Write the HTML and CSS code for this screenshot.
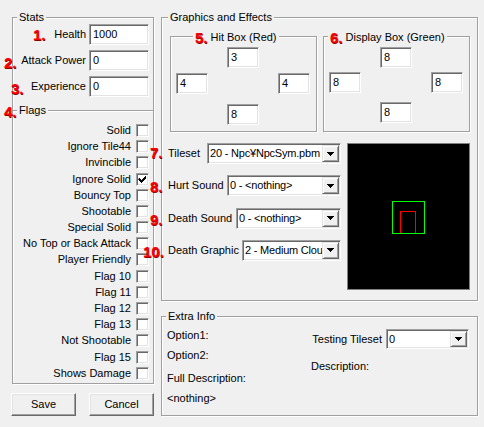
FILE: index.html
```html
<!DOCTYPE html>
<html>
<head>
<meta charset="utf-8">
<title>NPC Editor</title>
<link rel="stylesheet" href="styles.css">
</head>
<body>
<div class="dialog">
  <div class="left">
    <div class="group stats">
      <span class="legend">Stats</span>
      <div class="stat-grid">
        <span class="lbl">Health</span><span class="tb wide">1000</span>
        <span class="lbl">Attack Power</span><span class="tb wide">0</span>
        <span class="lbl">Experience</span><span class="tb wide">0</span>
      </div>
    </div>
    <div class="group flags">
      <span class="legend">Flags</span>
      <div class="flag"><span>Solid</span><span class="cb"></span></div>
      <div class="flag"><span>Ignore Tile44</span><span class="cb"></span></div>
      <div class="flag"><span>Invincible</span><span class="cb"></span></div>
      <div class="flag"><span>Ignore Solid</span><span class="cb"><svg width="9" height="9" viewBox="0 0 9 9"><path d="M1 3h1v1h1v1h1v-1h1v-1h1v-1h1v-1h1v3h-1v1h-1v1h-1v1h-1v1h-1v-1h-1v-1h-1v-1h-1z" fill="#000"/></svg></span></div>
      <div class="flag"><span>Bouncy Top</span><span class="cb"></span></div>
      <div class="flag"><span>Shootable</span><span class="cb"></span></div>
      <div class="flag"><span>Special Solid</span><span class="cb"></span></div>
      <div class="flag"><span>No Top or Back Attack</span><span class="cb"></span></div>
      <div class="flag"><span>Player Friendly</span><span class="cb"></span></div>
      <div class="flag"><span>Flag 10</span><span class="cb"></span></div>
      <div class="flag"><span>Flag 11</span><span class="cb"></span></div>
      <div class="flag"><span>Flag 12</span><span class="cb"></span></div>
      <div class="flag"><span>Flag 13</span><span class="cb"></span></div>
      <div class="flag"><span>Not Shootable</span><span class="cb"></span></div>
      <div class="flag"><span>Flag 15</span><span class="cb"></span></div>
      <div class="flag"><span>Shows Damage</span><span class="cb"></span></div>
    </div>
    <div class="buttons">
      <button class="btn">Save</button>
      <button class="btn">Cancel</button>
    </div>
  </div>

  <div class="right">
    <div class="group gfx">
      <span class="legend gfx-legend">Graphics and Effects</span>
      <div class="boxes">
        <div class="group box">
          <span class="legend hit-legend"><b class="num inl">5.</b>Hit Box (Red)</span>
          <div class="diamond hit">
            <span class="tb sm top">3</span>
            <span class="tb sm lft">4</span>
            <span class="tb sm rgt">4</span>
            <span class="tb sm bot">8</span>
          </div>
        </div>
        <div class="group box">
          <span class="legend"><b class="num inl">6.</b>Display Box (Green)</span>
          <div class="diamond disp">
            <span class="tb sm top">8</span>
            <span class="tb sm lft">8</span>
            <span class="tb sm rgt">8</span>
            <span class="tb sm bot">8</span>
          </div>
        </div>
      </div>
      <div class="lower">
        <div class="combos">
          <div class="crow"><span>Tileset</span><span class="combo w-tileset"><span class="ctext">20 - Npc¥NpcSym.pbm</span><span class="drop"><svg width="7" height="4" viewBox="0 0 7 4"><path d="M0 0h7v1h-1v1h-1v1h-1v1h-1v-1h-1v-1h-1v-1h-1z" fill="#000"/></svg></span></span></div>
          <div class="crow"><span>Hurt Sound</span><span class="combo w-hurt"><span class="ctext">0 - &lt;nothing&gt;</span><span class="drop"><svg width="7" height="4" viewBox="0 0 7 4"><path d="M0 0h7v1h-1v1h-1v1h-1v1h-1v-1h-1v-1h-1v-1h-1z" fill="#000"/></svg></span></span></div>
          <div class="crow"><span>Death Sound</span><span class="combo w-death"><span class="ctext">0 - &lt;nothing&gt;</span><span class="drop"><svg width="7" height="4" viewBox="0 0 7 4"><path d="M0 0h7v1h-1v1h-1v1h-1v1h-1v-1h-1v-1h-1v-1h-1z" fill="#000"/></svg></span></span></div>
          <div class="crow"><span>Death Graphic</span><span class="combo w-graphic"><span class="ctext">2 - Medium Clou</span><span class="drop"><svg width="7" height="4" viewBox="0 0 7 4"><path d="M0 0h7v1h-1v1h-1v1h-1v1h-1v-1h-1v-1h-1v-1h-1z" fill="#000"/></svg></span></span></div>
        </div>
        <div class="preview">
          <svg width="121" height="145" viewBox="0 0 121 145">
            <rect x="52.5" y="67.5" width="15" height="22" fill="none" stroke="#ff0000" stroke-width="1"/>
            <rect x="44.5" y="57.5" width="32" height="32" fill="none" stroke="#00ff00" stroke-width="1"/>
          </svg>
        </div>
      </div>
    </div>

    <div class="group extra">
      <span class="legend">Extra Info</span>
      <div class="ecol">
        <div class="line">Option1:</div>
        <div class="line l2">Option2:</div>
        <div class="line l3">Full Description:</div>
        <div class="line l4">&lt;nothing&gt;</div>
      </div>
      <div class="ecol rcol">
        <div class="trow"><span>Testing Tileset</span><span class="combo w-test"><span class="ctext">0</span><span class="drop"><svg width="7" height="4" viewBox="0 0 7 4"><path d="M0 0h7v1h-1v1h-1v1h-1v1h-1v-1h-1v-1h-1v-1h-1z" fill="#000"/></svg></span></span></div>
        <div class="line desc">Description:</div>
      </div>
    </div>
  </div>

  <b class="num n1">1.</b>
  <b class="num n2">2.</b>
  <b class="num n3">3.</b>
  <b class="num n4">4.</b>
  <b class="num n7">7.</b>
  <b class="num n8">8.</b>
  <b class="num n9">9.</b>
  <b class="num n10">10.</b>
</div>
</body>
</html>
```

FILE: styles.css
```css
* { box-sizing: border-box; }
html, body { margin: 0; padding: 0; background: #f0f0f0; }
body {
  font-family: "Liberation Sans", Arial, sans-serif;
  font-size: 11px;
  line-height: 13px;
  color: #000;
  width: 484px;
  height: 427px;
  overflow: hidden;
}
.dialog {
  position: relative;
  display: flex;
  align-items: flex-start;
  gap: 7px;
  padding: 17px 0 0 12px;
  height: 427px;
}
.left { width: 142px; display: flex; flex-direction: column; }
.right { width: 317px; display: flex; flex-direction: column; gap: 15px; }

/* group boxes */
.group {
  position: relative;
  border: 1px solid #a0a0a0;
  box-shadow: inset 1px 1px #fff, 1px 1px #fff;
}
.legend {
  position: absolute;
  top: -7px;
  left: 4px;
  padding: 0 2px;
  background: #f0f0f0;
  white-space: nowrap;
}
.gfx-legend { left: 6px; }
.hit-legend { left: 22px; }

/* text boxes */
.tb {
  display: block;
  height: 21px;
  background: #fff;
  border: 1px solid;
  border-color: #a0a0a0 #fff #fff #a0a0a0;
  box-shadow: inset 1px 1px #696969, inset -1px -1px #e3e3e3;
  padding: 0 3px;
  line-height: 19px;
  white-space: nowrap;
}
.tb.wide { width: 60px; }
.tb.sm { width: 32px; }

/* stats */
.stats {
  height: 93px;
  border-bottom: 0;
  padding: 6px 4px 0 0;
}
.stat-grid {
  display: grid;
  grid-template-columns: auto 60px;
  justify-content: end;
  align-items: center;
  column-gap: 3px;
  row-gap: 5px;
}
.lbl { justify-self: end; }

/* flags */
.flags {
  height: 274px;
  padding: 11.4px 4px 0 0;
}
.flag {
  display: flex;
  justify-content: flex-end;
  align-items: center;
  gap: 5px;
  height: 16.2px;
}
.cb {
  display: flex;
  align-items: center;
  justify-content: center;
  width: 13px;
  height: 13px;
  background: #fff;
  border: 1px solid;
  border-color: #a0a0a0 #fff #fff #a0a0a0;
  box-shadow: inset 1px 1px #696969, inset -1px -1px #e3e3e3;
}
.cb svg { display: block; }

/* buttons */
.buttons {
  display: flex;
  gap: 13px;
  margin: 9px 0 0 -1px;
}
.btn {
  width: 66px;
  height: 23px;
  padding: 0;
  font: inherit;
  color: #000;
  background: #f0f0f0;
  border: 1px solid;
  border-color: #fff #696969 #696969 #fff;
  box-shadow: inset -1px -1px #a0a0a0, inset 1px 1px #e3e3e3;
}

/* graphics */
.gfx {
  height: 284px;
  padding: 18px 7px 0 8px;
}
.boxes { display: flex; gap: 6px; }
.box {
  width: 147px;
  height: 96px;
  padding: 10px 6px 0 5px;
}
.diamond {
  display: grid;
  grid-template-columns: 32px 32px 32px;
  column-gap: 19px;
}
.diamond.hit { grid-template-rows: 26px 31px 21px; }
.diamond.disp { grid-template-rows: 25px 30px 21px; }
.diamond .top { grid-column: 2; grid-row: 1; }
.diamond .lft { grid-column: 1; grid-row: 2; }
.diamond .rgt { grid-column: 3; grid-row: 2; }
.diamond .bot { grid-column: 2; grid-row: 3; }

.lower {
  display: flex;
  gap: 6px;
  margin: 11px 0 0 -2px;
}
.combos {
  width: 173px;
  display: grid;
  grid-template-rows: repeat(4, 21px);
  row-gap: 11.33px;
}
.crow {
  display: flex;
  justify-content: space-between;
  align-items: center;
}
.combo {
  display: flex;
  align-items: center;
  height: 21px;
  padding: 1px;
  background: #fff;
  border: 1px solid;
  border-color: #a0a0a0 #fff #fff #a0a0a0;
  box-shadow: inset 1px 1px #696969, inset -1px -1px #e3e3e3;
}
.ctext {
  flex: 1;
  padding-left: 1px;
  letter-spacing: -0.2px;
  white-space: nowrap;
  overflow: hidden;
}
.drop {
  display: flex;
  align-items: center;
  justify-content: center;
  flex: none;
  width: 17px;
  height: 100%;
  background: #f0f0f0;
  border: 1px solid;
  border-color: #e3e3e3 #696969 #696969 #e3e3e3;
  box-shadow: inset 1px 1px #fff, inset -1px -1px #a0a0a0;
}
.drop svg { display: block; }
.w-tileset { width: 134px; }
.w-hurt { width: 114px; }
.w-death { width: 105px; }
.w-graphic { width: 99px; }
.w-test { width: 83px; height: 20px; }

.preview {
  width: 123px;
  height: 147px;
  background: #000;
  border: 1px solid #808080;
}
.preview svg { display: block; }

/* extra info */
.extra {
  height: 100px;
  padding: 11px 8px 0 5px;
  display: grid;
  grid-template-columns: 144px 1fr;
}
.line { line-height: 14px; white-space: nowrap; }
.l2 { margin-top: 6px; }
.l3 { margin-top: 9px; }
.l4 { margin-top: 6px; }
.rcol { padding-top: 1px; }
.trow {
  display: flex;
  justify-content: flex-end;
  align-items: center;
  gap: 4px;
}
.desc { margin-top: 10px; }

/* red annotation numbers */
.num {
  font-family: "Liberation Sans", Arial, sans-serif;
  font-size: 15px;
  line-height: 15px;
  font-weight: bold;
  color: #ff0000;
  text-shadow: 0.6px 0.6px 0 #8b0000;
  white-space: nowrap;
}
.num.inl { vertical-align: -2px; margin-right: 3px; }
.n1, .n2, .n3, .n4, .n7, .n8, .n9, .n10 { position: absolute; }
.n1 { left: 33px; top: 27px; }
.n2 { left: 4px; top: 55px; }
.n3 { left: 11px; top: 81px; }
.n4 { left: 4px; top: 104px; }
.n7 { left: 150px; top: 145px; }
.n8 { left: 150px; top: 179px; }
.n9 { left: 150px; top: 212px; }
.n10 { left: 143px; top: 244px; }
```
